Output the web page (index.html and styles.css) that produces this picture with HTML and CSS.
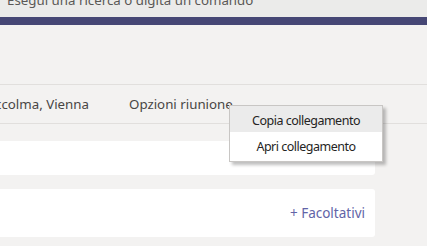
FILE: index.html
```html
<!DOCTYPE html>
<html lang="it">
<head>
    <meta charset="UTF-8">
    <title>Nuova riunione</title>
    <link rel="stylesheet" href="styles.css">
</head>
<body>
    <div class="topbar">
        <div class="search">Esegui una ricerca o digita un comando</div>
    </div>
    <div class="accent"></div>
    <div class="page">
        <div class="details-row">
            <div class="timezone"><span>(UTC+01:00) Amsterdam, Berlino, Berna, Roma, Stoccolma, Vienna</span></div>
            <div class="options">
                Opzioni riunione
                <ul class="menu">
                    <li class="menu-item active">Copia collegamento</li>
                    <li class="menu-item">Apri collegamento</li>
                </ul>
            </div>
        </div>
        <div class="card card-small"></div>
        <div class="card card-attendees">
            <a href="#" class="optional">+ Facoltativi</a>
        </div>
    </div>
</body>
</html>
```

FILE: styles.css
```css
* {
    margin: 0;
    padding: 0;
    box-sizing: border-box;
}

body {
    font-family: "Noto Sans", "Open Sans", sans-serif;
    font-size: 13.3px;
    background: #f3f2f1;
    color: #484644;
    width: 427px;
    height: 246px;
    overflow: hidden;
}

.topbar {
    height: 17px;
    background: #ebebea;
    overflow: hidden;
}

.search {
    padding-left: 7px;
    margin-top: -10px;
    line-height: 20px;
    font-size: 13.3px;
    color: #5a5856;
}

.accent {
    height: 8px;
    background: #464775;
}

.page {
    padding-top: 59px;
    width: 375px;
}

.details-row {
    display: flex;
    align-items: center;
    height: 40px;
    width: 427px;
    border-top: 1px solid #e1dfdd;
    border-bottom: 1px solid #e1dfdd;
}

.timezone {
    width: 89px;
    overflow: hidden;
    display: flex;
    justify-content: flex-end;
    white-space: nowrap;
}

.options {
    position: relative;
    margin-left: 40px;
}

.menu {
    position: absolute;
    left: 100px;
    top: 10px;
    width: 154px;
    list-style: none;
    background: #fff;
    border: 1px solid #c8c6c4;
    box-shadow: 3px 3px 3px rgba(0, 0, 0, 0.25);
    padding: 0 0 3px;
    z-index: 10;
}

.menu-item {
    height: 26px;
    line-height: 26px;
    padding-top: 2px;
    text-align: center;
    font-size: 12.5px;
    letter-spacing: -0.5px;
    color: #252423;
    cursor: pointer;
}

.menu-item.active {
    background: #ebebeb;
}

.card {
    background: #fff;
    border-radius: 0 3px 3px 0;
}

.card-small {
    margin-top: 17px;
    height: 34px;
}

.card-attendees {
    margin-top: 14px;
    height: 48px;
    display: flex;
    align-items: center;
    justify-content: flex-end;
    padding-right: 10px;
}

.optional {
    font-size: 13.5px;
    color: #6264a7;
    text-decoration: none;
}
```
